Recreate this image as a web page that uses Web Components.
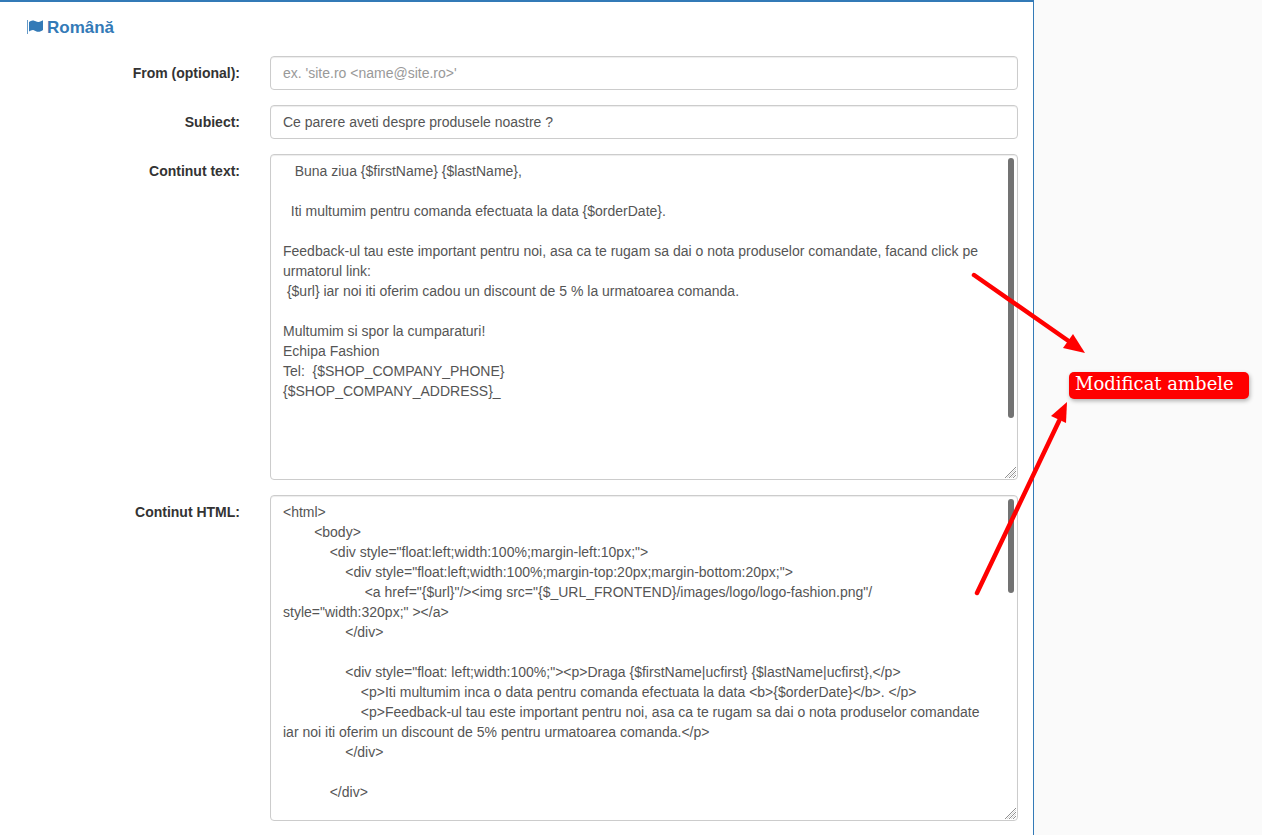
<!DOCTYPE html>
<html lang="ro">
<head>
<meta charset="utf-8">
<title>Română</title>
<style>
html,body{margin:0;padding:0;height:100%;overflow:hidden;background:#fafafa;}
body{font-family:"Liberation Sans",Arial,sans-serif;font-size:14px;color:#333;}
</style>
</head>
<body>
<x-page>
  <x-panel>
    <x-lang-title>Română</x-lang-title>
    <x-field label="From (optional):"><x-input placeholder="ex. 'site.ro &lt;name@site.ro&gt;'"></x-input></x-field>
    <x-field label="Subiect:"><x-input>Ce parere aveti despre produsele noastre ?</x-input></x-field>
    <x-field label="Continut text:"><x-area thumb="260">   Buna ziua {$firstName} {$lastName},

  Iti multumim pentru comanda efectuata la data {$orderDate}.

Feedback-ul tau este important pentru noi, asa ca te rugam sa dai o nota produselor comandate, facand click pe urmatorul link:
 {$url} iar noi iti oferim cadou un discount de 5 % la urmatoarea comanda.

Multumim si spor la cumparaturi!
Echipa Fashion
Tel:  {$SHOP_COMPANY_PHONE}
{$SHOP_COMPANY_ADDRESS}_</x-area></x-field>
    <x-field label="Continut HTML:"><x-area thumb="94">&lt;html&gt;
        &lt;body&gt;
            &lt;div style="float:left;width:100%;margin-left:10px;"&gt;
                &lt;div style="float:left;width:100%;margin-top:20px;margin-bottom:20px;"&gt;
                     &lt;a href="{$url}"/&gt;&lt;img src="{$_URL_FRONTEND}/images/logo/logo-fashion.png"/
style="width:320px;" &gt;&lt;/a&gt;
                &lt;/div&gt;

                &lt;div style="float: left;width:100%;"&gt;&lt;p&gt;Draga {$firstName|ucfirst} {$lastName|ucfirst},&lt;/p&gt;
                    &lt;p&gt;Iti multumim inca o data pentru comanda efectuata la data &lt;b&gt;{$orderDate}&lt;/b&gt;. &lt;/p&gt;
                    &lt;p&gt;Feedback-ul tau este important pentru noi, asa ca te rugam sa dai o nota produselor comandate
iar noi iti oferim un discount de 5% pentru urmatoarea comanda.&lt;/p&gt;
                &lt;/div&gt;

            &lt;/div&gt;</x-area></x-field>
  </x-panel>
  <x-annotation>Modificat ambele</x-annotation>
</x-page>
<script>
function def(name, css, html, init){
  customElements.define(name, class extends HTMLElement{
    connectedCallback(){
      if(this.shadowRoot) return;
      const r=this.attachShadow({mode:"open"});
      r.innerHTML="<style>"+css+"</style>"+(typeof html==="function"?html(this):html);
      if(init) init(this,r);
    }
  });
}
const esc=s=>String(s).replace(/&/g,"&amp;").replace(/</g,"&lt;").replace(/"/g,"&quot;");

def("x-page",
  ":host{display:block;position:relative;height:835px;overflow:hidden;background:#fafafa;}",
  "<slot></slot>");

def("x-panel",
  ":host{display:block;box-sizing:border-box;width:1034px;height:835px;overflow:hidden;background:#fff;border-top:2px solid #337ab7;border-right:1px solid #337ab7;padding:15px 15px 0 0;}",
  "<slot></slot>");

def("x-lang-title",
  ":host{display:flex;align-items:center;gap:4px;height:22px;margin:0 0 17px 27px;color:#337ab7;font:bold 17px/22px 'Liberation Sans',Arial,sans-serif;}"+
  "svg{width:16px;height:16px;flex:none;fill:#337ab7;position:relative;top:-1px;}",
  `<svg viewBox="0 0 16 16" aria-hidden="true"><rect x="0" y="1" width="1" height="14" opacity=".75"/><path d="M2 3C3.5 1.7 5 1.2 6.7 1.6 8.3 2 9.6 3.2 11.6 3 13 2.8 14.8 2 16 1.3V11C14.6 12 13 12.8 11.3 12.8 9.6 12.8 8.4 11.5 6.8 11.2 5.1 10.9 3.5 11.4 2 12.6Z"/></svg><span><slot></slot></span>`);

def("x-field",
  ":host{display:grid;grid-template-columns:240px 748px;column-gap:30px;margin-bottom:15px;}"+
  "label{text-align:right;font:bold 14px/20px 'Liberation Sans',Arial,sans-serif;color:#333;padding-top:7px;}",
  el=>`<label>${esc(el.getAttribute("label"))}</label><div><slot></slot></div>`);

def("x-input",
  ":host{display:block;box-sizing:border-box;height:34px;padding:6px 12px;border:1px solid #ccc;border-radius:4px;background:#fff;color:#555;font:14px/20px 'Liberation Sans',Arial,sans-serif;box-shadow:inset 0 1px 1px rgba(0,0,0,.075);white-space:nowrap;overflow:hidden;}"+
  ".ph{color:#999;}",
  el=>{const p=el.getAttribute("placeholder");return p?`<span class="ph">${esc(p)}</span>`:"<slot></slot>";});

def("x-area",
  ":host{display:block;position:relative;box-sizing:border-box;height:326px;border:1px solid #ccc;border-radius:4px;background:#fff;color:#555;font:14px/20px 'Liberation Sans',Arial,sans-serif;box-shadow:inset 0 1px 1px rgba(0,0,0,.075);overflow:hidden;}"+
  ".txt{box-sizing:border-box;width:729px;height:324px;padding:6px 12px;overflow:hidden;white-space:pre-wrap;word-wrap:break-word;}"+
  ".thumb{position:absolute;top:3px;right:3px;width:6px;border-radius:3px;background:#737373;}"+
  ".grip{position:absolute;right:1px;bottom:1px;width:11px;height:11px;}",
  el=>`<div class="txt"><slot></slot></div><div class="thumb" style="height:${+el.getAttribute("thumb")}px"></div>`+
  `<svg class="grip" viewBox="0 0 11 11" aria-hidden="true"><g stroke="#8f8f8f" stroke-width="1"><path d="M0 11 11 0"/><path d="M4 11 11 4"/><path d="M8 11 11 8"/></g><g stroke="#d8d8d8" stroke-width="1"><path d="M2 11 11 2"/><path d="M6 11 11 6"/></g></svg>`);

def("x-annotation",
  ":host{display:block;position:absolute;left:0;top:0;width:1262px;height:835px;pointer-events:none;}"+
  "svg{position:absolute;left:0;top:0;width:1262px;height:835px;}"+
  ".badge{position:absolute;left:1069px;top:372px;box-sizing:border-box;width:180px;height:27px;padding:0 6px;border-radius:5px;background:#f00;color:#fff;font:18px/23px 'DejaVu Serif',serif;white-space:nowrap;box-shadow:1px 2px 4px rgba(0,0,0,.3);}",
  `<svg viewBox="0 0 1262 835" aria-hidden="true">
    <g stroke="#f00" stroke-width="4.5" stroke-linecap="round" fill="none">
      <path d="M974 275 1070 342"/>
      <path d="M977 593 1059 421"/>
    </g>
    <g fill="#f00">
      <path d="M1085 353 1063 348 1073 334Z"/>
      <path d="M1067 402 1051 416 1066 423Z"/>
    </g>
  </svg><div class="badge"><slot></slot></div>`);
</script>
</body>
</html>
